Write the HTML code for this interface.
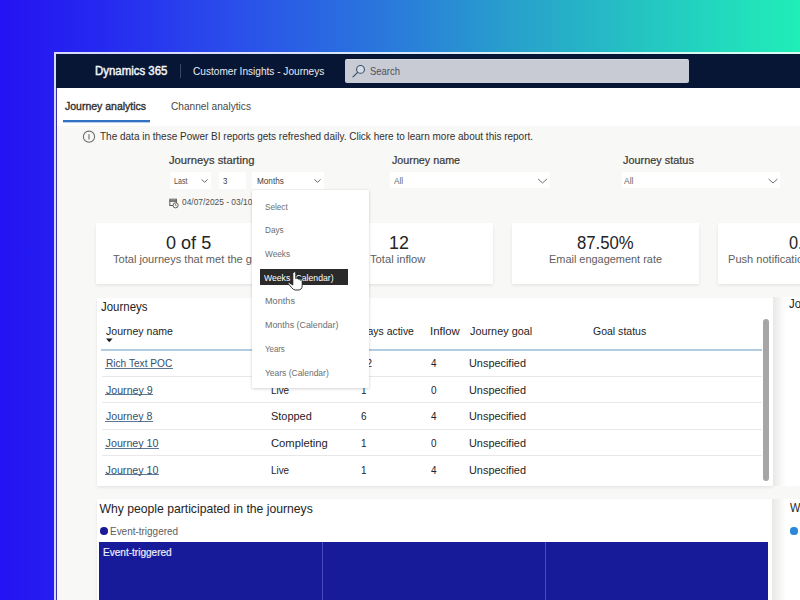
<!DOCTYPE html>
<html><head><meta charset="utf-8">
<style>
*{margin:0;padding:0;box-sizing:border-box}
html,body{width:800px;height:600px;overflow:hidden}
body{position:relative;font-family:"Liberation Sans",sans-serif;background:linear-gradient(90deg,#2412f2 0%,#262cf0 14%,#2a50ea 30%,#2a78dc 48%,#28a0cc 64%,#24c8c2 82%,#20eeb8 100%)}
.a{position:absolute}
.t{position:absolute;white-space:nowrap;line-height:1;transform-origin:0 0}
.card{position:absolute;background:#fff;box-shadow:0 1.5px 3px rgba(0,0,0,.08),0 0 1px rgba(0,0,0,.04)}
.box{position:absolute;background:#fff}
svg{position:absolute;overflow:visible}
</style></head><body>
<!-- window frame -->
<div class="a" style="left:54px;top:52px;width:760px;height:560px;background:rgba(255,255,255,.82)"></div>
<div class="a" style="left:56px;top:54px;width:760px;height:560px;background:#3832b0"></div>
<div class="a" style="left:57px;top:54px;width:760px;height:560px;background:#f8f8f6"></div>
<div class="a" style="left:56px;top:54px;width:744px;height:34px;background:#061634"></div>
<div class="a" style="left:57px;top:88px;width:743px;height:38px;background:#fff"></div>
<!-- header -->
<div class="a" style="left:180px;top:64px;width:1px;height:14px;background:#3a4763"></div>
<div class="a" style="left:345px;top:59px;width:344px;height:24px;background:#c9cbd4;border-radius:2px;border-top:1px solid #d9dbe3"></div>
<svg style="left:345px;top:60px" width="30" height="23" viewBox="0 0 30 23"><circle cx="15.5" cy="9.4" r="3.9" fill="#d6dbe6" stroke="#36506c" stroke-width="1.1"/><line x1="12.6" y1="12.3" x2="8" y2="16.9" stroke="#36506c" stroke-width="1.2" stroke-linecap="round"/></svg>
<!-- tabs -->
<div class="a" style="left:63px;top:120.3px;width:87px;height:1.8px;background:#3372c2"></div>
<div class="a" style="left:63px;top:122px;width:87px;height:1px;background:#b5d0ee"></div>
<!-- info icon -->
<svg style="left:80px;top:128px" width="18" height="18" viewBox="0 0 18 18"><circle cx="9" cy="8.7" r="5.6" fill="none" stroke="#6a6a6a" stroke-width="1.05"/><rect x="8.45" y="6.2" width="1.1" height="5.3" fill="#6a6a6a"/></svg>
<!-- filter boxes -->
<div class="box" style="left:170px;top:172px;width:41px;height:17px"></div>
<div class="box" style="left:219px;top:172px;width:27px;height:17px"></div>
<div class="box" style="left:252px;top:172px;width:72px;height:17px"></div>
<div class="box" style="left:390px;top:172px;width:160px;height:16px"></div>
<div class="box" style="left:622px;top:172px;width:158px;height:16px"></div>
<svg style="left:0;top:0" width="800" height="200" viewBox="0 0 800 200"><g fill="none" stroke="#5c5c5c" stroke-width="0.95"><polyline points="201.6,179.4 204.6,182.4 207.6,179.4"/><polyline points="314.5,179.4 317.5,182.4 320.5,179.4"/></g><g fill="none" stroke="#666" stroke-width="0.95"><polyline points="538.1,179 542.5,183 546.9,179"/><polyline points="768.6,179 773,183 777.4,179"/></g>
<g fill="none" stroke="#5a5a5a" stroke-width="1"><rect x="169.8" y="199.2" width="6.6" height="6.3"/><line x1="169.8" y1="201" x2="176.4" y2="201" stroke-width="1.6"/></g><circle cx="175.6" cy="205.3" r="2.6" fill="#f8f8f6" stroke="#5a5a5a" stroke-width="0.95"/><polyline points="175.6,203.8 175.6,205.4 176.6,206" fill="none" stroke="#5a5a5a" stroke-width="0.8"/></svg>
<!-- KPI cards -->
<div class="card" style="left:96px;top:223px;width:186px;height:61px"></div>
<div class="card" style="left:302px;top:223px;width:191px;height:61px"></div>
<div class="card" style="left:512px;top:223px;width:187px;height:61px"></div>
<div class="card" style="left:718px;top:223px;width:188px;height:61px"></div>
<!-- journeys panel -->
<div class="card" style="left:97px;top:298px;width:676px;height:188px"></div>
<div class="a" style="left:773px;top:297px;width:13px;height:189px;background:linear-gradient(90deg,#e8e8e7 0%,#eeeeed 25%,#fafafa 75%,#fff 100%)"></div><div class="a" style="left:786px;top:297px;width:20px;height:189px;background:#fff"></div>
<svg style="left:0;top:0" width="800" height="600" viewBox="0 0 800 600"><path d="M106 338.5H112.6L109.3 342.2Z" fill="#1e1e1e"/></svg>
<div class="a" style="left:101px;top:349px;width:661px;height:1.6px;background:#b0cce0"></div>
<div class="a" style="left:102px;top:375.60px;width:660px;height:1px;background:#e8e8e8"></div><div class="a" style="left:102px;top:402.15px;width:660px;height:1px;background:#e8e8e8"></div><div class="a" style="left:102px;top:428.70px;width:660px;height:1px;background:#e8e8e8"></div><div class="a" style="left:102px;top:455.25px;width:660px;height:1px;background:#e8e8e8"></div>
<div class="a" style="left:105.0px;top:367.80px;width:67.75px;height:1.1px;background:#5a7896"></div><div class="a" style="left:105.0px;top:394.40px;width:47.75px;height:1.1px;background:#5a7896"></div><div class="a" style="left:105.0px;top:421.00px;width:47.50px;height:1.1px;background:#5a7896"></div><div class="a" style="left:105.0px;top:447.60px;width:53.80px;height:1.1px;background:#5a7896"></div><div class="a" style="left:105.0px;top:474.20px;width:53.80px;height:1.1px;background:#5a7896"></div>
<div class="a" style="left:763px;top:319px;width:6px;height:162px;background:#a6a6a6;border-radius:3px"></div>
<!-- bottom panel -->
<div class="card" style="left:97px;top:498.5px;width:675px;height:120px"></div>
<div class="a" style="left:772px;top:499px;width:14px;height:120px;background:linear-gradient(90deg,#e8e8e7 0%,#eeeeed 25%,#fafafa 75%,#fff 100%)"></div><div class="a" style="left:786px;top:499px;width:20px;height:120px;background:#fff"></div>
<div class="a" style="left:100px;top:527.2px;width:7.5px;height:7.5px;border-radius:50%;background:#1a1a96"></div>
<div class="a" style="left:99px;top:541.5px;width:669px;height:70px;background:#171b9a"></div>
<div class="a" style="left:322px;top:542px;width:1px;height:70px;background:#4a4abd"></div>
<div class="a" style="left:545px;top:542px;width:1px;height:70px;background:#4a4abd"></div>
<div class="a" style="left:790.4px;top:527.4px;width:7.2px;height:7.2px;border-radius:50%;background:#2b88d8"></div>
<div class="t" style="left:94.70px;top:65.53px;font-size:11.9px;-webkit-text-stroke:0.3px #f2f4f8;color:#f2f4f8;transform:scaleX(0.9614);-webkit-text-stroke:0.45px #f2f4f8;">Dynamics 365</div>
<div class="t" style="left:192.70px;top:66.41px;font-size:10.5px;color:#e8ecf3;transform:scaleX(0.9618);">Customer Insights - Journeys</div>
<div class="t" style="left:369.70px;top:65.86px;font-size:10.8px;color:#4c4d57;transform:scaleX(0.8771);">Search</div>
<div class="t" style="left:65.40px;top:100.77px;font-size:10.9px;-webkit-text-stroke:0.3px #323130;color:#323130;transform:scaleX(0.9634);-webkit-text-stroke:0.38px #323130;">Journey analytics</div>
<div class="t" style="left:170.70px;top:100.57px;font-size:10.9px;color:#4a4846;transform:scaleX(0.9304);">Channel analytics</div>
<div class="t" style="left:99.75px;top:132.27px;font-size:10.2px;color:#323130;transform:scaleX(0.9809);">The data in these Power BI reports gets refreshed daily. Click here to learn more about this report.</div>
<div class="t" style="left:169.00px;top:154.67px;font-size:10.9px;-webkit-text-stroke:0.3px #3b3a39;color:#3b3a39;transform:scaleX(1.0305);-webkit-text-stroke:0.22px #3b3a39;">Journeys starting</div>
<div class="t" style="left:392.00px;top:154.67px;font-size:10.9px;-webkit-text-stroke:0.3px #3b3a39;color:#3b3a39;transform:scaleX(0.9861);-webkit-text-stroke:0.22px #3b3a39;">Journey name</div>
<div class="t" style="left:623.00px;top:154.67px;font-size:10.9px;-webkit-text-stroke:0.3px #3b3a39;color:#3b3a39;-webkit-text-stroke:0.22px #3b3a39;">Journey status</div>
<div class="t" style="left:173.75px;top:176.74px;font-size:8.7px;color:#505050;transform:scaleX(0.8232);">Last</div>
<div class="t" style="left:223.10px;top:177.07px;font-size:8.9px;color:#333333;transform:scaleX(0.8800);">3</div>
<div class="t" style="left:257.00px;top:176.74px;font-size:8.7px;color:#404040;transform:scaleX(0.9401);">Months</div>
<div class="t" style="left:393.75px;top:176.94px;font-size:8.7px;color:#6a6a6a;transform:scaleX(0.9512);">All</div>
<div class="t" style="left:624.25px;top:176.94px;font-size:8.7px;color:#6a6a6a;transform:scaleX(0.9769);">All</div>
<div class="t" style="left:181.50px;top:197.84px;font-size:8.7px;color:#505050;transform:scaleX(0.9643);">04/07/2025 - 03/10/2025</div>
<div class="t" style="left:166.00px;top:234.90px;font-size:17.6px;color:#252423;transform:scaleX(1.0264);">0 of 5</div>
<div class="t" style="left:388.59px;top:234.80px;font-size:17.6px;color:#252423;transform:scaleX(1.0121);">12</div>
<div class="t" style="left:577.00px;top:235.00px;font-size:17.6px;color:#252423;transform:scaleX(0.9496);">87.50%</div>
<div class="t" style="left:788.75px;top:234.90px;font-size:17.6px;color:#252423;transform:scaleX(0.9300);">0.00%</div>
<div class="t" style="left:549.00px;top:253.56px;font-size:10.8px;color:#605e5c;transform:scaleX(1.0123);">Email engagement rate</div>
<div class="t" style="left:113.40px;top:253.56px;font-size:10.8px;color:#605e5c;transform:scaleX(1.0247);">Total journeys that met the goal</div>
<div class="t" style="left:370.40px;top:253.86px;font-size:10.8px;color:#605e5c;transform:scaleX(1.0371);">Total inflow</div>
<div class="t" style="left:728.00px;top:253.66px;font-size:10.8px;color:#605e5c;transform:scaleX(1.0247);">Push notification engagement rate</div>
<div class="t" style="left:100.80px;top:301.03px;font-size:12.6px;color:#252423;transform:scaleX(0.9094);">Journeys</div>
<div class="t" style="left:789.00px;top:297.53px;font-size:12.6px;color:#252423;transform:scaleX(0.9000);">Journeys by status</div>
<div class="t" style="left:105.50px;top:326.06px;font-size:10.8px;color:#252423;transform:scaleX(0.9793);">Journey name</div>
<div class="t" style="left:270.50px;top:326.06px;font-size:10.8px;color:#252423;transform:scaleX(0.9300);">Status</div>
<div class="t" style="left:360.40px;top:326.06px;font-size:10.8px;color:#252423;transform:scaleX(0.9660);">Days active</div>
<div class="t" style="left:429.75px;top:326.06px;font-size:10.8px;color:#252423;transform:scaleX(1.0545);">Inflow</div>
<div class="t" style="left:469.50px;top:326.06px;font-size:10.8px;color:#252423;transform:scaleX(1.0053);">Journey goal</div>
<div class="t" style="left:593.25px;top:326.06px;font-size:10.8px;color:#252423;transform:scaleX(0.9735);">Goal status</div>
<div class="t" style="left:105.60px;top:358.14px;font-size:10.7px;color:#34506c;transform:scaleX(0.9473);">Rich Text POC</div>
<div class="t" style="left:270.60px;top:358.14px;font-size:10.7px;color:#252423;transform:scaleX(0.9231);">Live</div>
<div class="t" style="left:360.60px;top:358.14px;font-size:10.7px;color:#252423;transform:scaleX(0.9300);">12</div>
<div class="t" style="left:430.60px;top:358.14px;font-size:10.7px;color:#252423;transform:scaleX(0.9300);">4</div>
<div class="t" style="left:469.00px;top:358.14px;font-size:10.7px;color:#252423;transform:scaleX(1.0197);">Unspecified</div>
<div class="t" style="left:105.60px;top:384.74px;font-size:10.7px;color:#34506c;transform:scaleX(0.9927);">Journey 9</div>
<div class="t" style="left:270.60px;top:384.74px;font-size:10.7px;color:#252423;transform:scaleX(0.9231);">Live</div>
<div class="t" style="left:360.60px;top:384.74px;font-size:10.7px;color:#252423;transform:scaleX(0.9300);">1</div>
<div class="t" style="left:430.60px;top:384.74px;font-size:10.7px;color:#252423;transform:scaleX(0.9300);">0</div>
<div class="t" style="left:469.00px;top:384.74px;font-size:10.7px;color:#252423;transform:scaleX(1.0197);">Unspecified</div>
<div class="t" style="left:105.60px;top:411.34px;font-size:10.7px;color:#34506c;transform:scaleX(0.9874);">Journey 8</div>
<div class="t" style="left:270.60px;top:411.34px;font-size:10.7px;color:#252423;transform:scaleX(1.0232);">Stopped</div>
<div class="t" style="left:360.60px;top:411.34px;font-size:10.7px;color:#252423;transform:scaleX(0.9300);">6</div>
<div class="t" style="left:430.60px;top:411.34px;font-size:10.7px;color:#252423;transform:scaleX(0.9300);">4</div>
<div class="t" style="left:469.00px;top:411.34px;font-size:10.7px;color:#252423;transform:scaleX(1.0197);">Unspecified</div>
<div class="t" style="left:105.60px;top:437.94px;font-size:10.7px;color:#34506c;">Journey 10</div>
<div class="t" style="left:270.60px;top:437.94px;font-size:10.7px;color:#252423;transform:scaleX(1.0496);">Completing</div>
<div class="t" style="left:360.60px;top:437.94px;font-size:10.7px;color:#252423;transform:scaleX(0.9300);">1</div>
<div class="t" style="left:430.60px;top:437.94px;font-size:10.7px;color:#252423;transform:scaleX(0.9300);">0</div>
<div class="t" style="left:469.00px;top:437.94px;font-size:10.7px;color:#252423;transform:scaleX(1.0197);">Unspecified</div>
<div class="t" style="left:105.60px;top:464.54px;font-size:10.7px;color:#34506c;">Journey 10</div>
<div class="t" style="left:270.60px;top:464.54px;font-size:10.7px;color:#252423;transform:scaleX(0.9231);">Live</div>
<div class="t" style="left:360.60px;top:464.54px;font-size:10.7px;color:#252423;transform:scaleX(0.9300);">1</div>
<div class="t" style="left:430.60px;top:464.54px;font-size:10.7px;color:#252423;transform:scaleX(0.9300);">4</div>
<div class="t" style="left:469.00px;top:464.54px;font-size:10.7px;color:#252423;transform:scaleX(1.0197);">Unspecified</div>
<div class="t" style="left:99.40px;top:503.07px;font-size:12.2px;color:#252423;">Why people participated in the journeys</div>
<div class="t" style="left:790.00px;top:502.27px;font-size:12.2px;color:#252423;transform:scaleX(0.9000);">Why people participated</div>
<div class="t" style="left:109.75px;top:526.01px;font-size:10.5px;color:#605e5c;transform:scaleX(0.9486);">Event-triggered</div>
<div class="t" style="left:103.00px;top:547.97px;font-size:10.2px;-webkit-text-stroke:0.3px #eeeef8;color:#eeeef8;transform:scaleX(0.9859);-webkit-text-stroke:0.2px #eeeef8;">Event-triggered</div>
<!-- dropdown -->
<div class="a" style="left:252px;top:190px;width:117px;height:198px;background:#fff;box-shadow:0 1px 3px rgba(0,0,0,.16),0 0 1px rgba(0,0,0,.1)"></div>
<div class="a" style="left:260px;top:269px;width:88px;height:16px;background:#2a2a2a"></div>
<div class="t" style="left:264.75px;top:201.62px;font-size:9.6px;color:#6e6e6e;transform:scaleX(0.8519);">Select</div>
<div class="t" style="left:264.75px;top:224.97px;font-size:9.6px;color:#6e6e6e;transform:scaleX(0.8499);">Days</div>
<div class="t" style="left:264.75px;top:248.97px;font-size:9.6px;color:#6e6e6e;transform:scaleX(0.8603);">Weeks</div>
<div class="t" style="left:264.40px;top:273.27px;font-size:9.6px;color:#ffffff;transform:scaleX(0.9014);">Weeks (Calendar)</div>
<div class="t" style="left:264.75px;top:296.47px;font-size:9.6px;color:#6e6e6e;transform:scaleX(0.9522);">Months</div>
<div class="t" style="left:264.75px;top:320.27px;font-size:9.6px;color:#6e6e6e;transform:scaleX(0.9243);">Months (Calendar)</div>
<div class="t" style="left:264.75px;top:343.57px;font-size:9.6px;color:#6e6e6e;transform:scaleX(0.8182);">Years</div>
<div class="t" style="left:264.75px;top:368.07px;font-size:9.6px;color:#6e6e6e;transform:scaleX(0.8830);">Years (Calendar)</div>
<!-- hand cursor -->
<svg style="left:286px;top:270px" width="18" height="22" viewBox="0 0 18 22"><path d="M6.8 3Q8.3 0.6 9.8 3V8.6Q10.9 7.2 12 8.6V9.2Q13.1 8 14.2 9.6V10.2Q15.2 9 16.2 10.6V15.5Q16.2 20 12 20H9.5Q7.2 20 5.8 17.8L2.2 13.6Q1.6 12.2 3.2 12.6L6.8 15Z" fill="#fff" stroke="#1a1a1a" stroke-width="0.9" stroke-linejoin="round"/></svg>
</body></html>
